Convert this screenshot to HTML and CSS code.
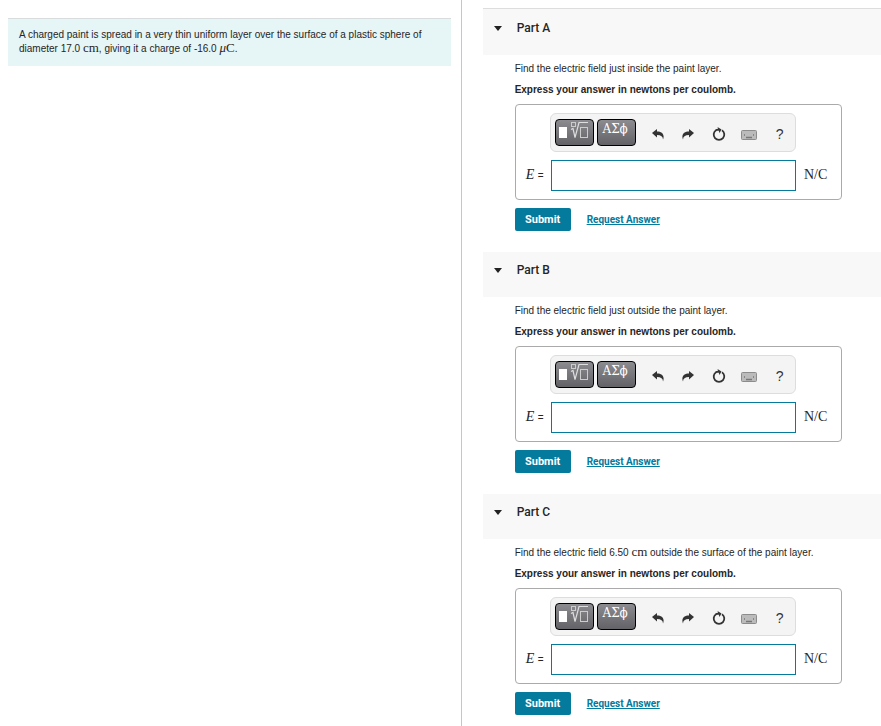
FILE: index.html
```html
<!DOCTYPE html>
<html lang="en">
<head>
  <meta charset="UTF-8">
  <meta name="viewport" content="width=device-width, initial-scale=1.0">
  <title>Charged Paint Layer</title>
  <link rel="stylesheet" href="styles.css">
</head>
<body>
  <!-- Shared icons -->
  <svg class="sprite" aria-hidden="true">
    <symbol id="template" viewBox="0 0 39 27">
      <rect x="4" y="7" width="8" height="11" fill="#fff"/>
      <rect x="16.500" y="2.500" width="4" height="4" fill="none" stroke="#ccc"/>
      <path d="M16 9.500l2-1 2 9 4-15h9" fill="none" stroke="#ddd" stroke-width="1.200"/>
      <rect x="25.500" y="7.500" width="7" height="10" fill="none" stroke="#ccc"/>
    </symbol>
    <symbol id="undo" viewBox="0 0 12 12">
      <path d="M0 5l5-4v2.500c5 0 8 3 6 8 0-3-2-4.500-6-4.500v2.500z" fill="#333"/>
    </symbol>
    <symbol id="redo" viewBox="0 0 12 12">
      <path d="M12 5L7 1v2.500c-5 0-8 3-6 8 0-3 2-4.500 6-4.500v2.500z" fill="#333"/>
    </symbol>
    <symbol id="reset" viewBox="0 0 14 14">
      <path d="M10 3.200a5.300 5.300 0 1 1-6 0L7 2.500" fill="none" stroke="#333" stroke-width="1.800"/>
      <path d="M5.500 0l4 2.500-2 3.500z" fill="#333"/>
    </symbol>
    <symbol id="keyboard" viewBox="0 0 16 10">
      <rect x=".5" y=".5" width="15" height="9" rx="1" fill="#bbb" stroke="#8c8c8c"/>
      <path d="M3 5h1M12 5h1M5 7.500h6" stroke="#777" stroke-width="1.500" fill="none"/>
    </symbol>
  </svg>

  <main class="page">
    <!-- Problem statement -->
    <section class="problem">
      <p class="statement">A charged paint is spread in a very thin uniform layer over the surface of a plastic sphere of diameter 17.0 <span class="math">cm</span>, giving it a charge of -16.0 <span class="math"><i>μ</i>C</span>.</p>
    </section>

    <!-- Answer parts -->
    <div class="parts">
      <section class="part">
        <h2 class="part-header"><button type="button" class="toggle"><span class="caret"></span>Part A</button></h2>
        <form class="part-body">
          <p>Find the electric field just inside the paint layer.</p>
          <p class="instruction">Express your answer in newtons per coulomb.</p>
          <div class="answer-box">
            <div class="toolbar">
              <button type="button" class="dark-btn" aria-label="Templates"><svg><use href="#template"/></svg></button>
              <button type="button" class="dark-btn">ΑΣϕ</button>
              <div class="tools">
                <button type="button" class="tool" aria-label="Undo"><svg width="12" height="12"><use href="#undo"/></svg></button>
                <button type="button" class="tool" aria-label="Redo"><svg width="12" height="12"><use href="#redo"/></svg></button>
                <button type="button" class="tool" aria-label="Reset"><svg width="14" height="14"><use href="#reset"/></svg></button>
                <button type="button" class="tool" aria-label="Keyboard shortcuts"><svg class="keys" width="16" height="10"><use href="#keyboard"/></svg></button>
                <button type="button" class="tool">?</button>
              </div>
            </div>
            <label class="math" for="answerA"><i>E</i> <span class="equals">=</span></label>
            <input type="text" id="answerA" class="answer">
            <span class="math unit">N/C</span>
          </div>
          <div class="actions">
            <button type="submit" class="submit">Submit</button>
            <a href="#" class="request">Request Answer</a>
          </div>
        </form>
      </section>

      <section class="part">
        <h2 class="part-header"><button type="button" class="toggle"><span class="caret"></span>Part B</button></h2>
        <form class="part-body">
          <p>Find the electric field just outside the paint layer.</p>
          <p class="instruction">Express your answer in newtons per coulomb.</p>
          <div class="answer-box">
            <div class="toolbar">
              <button type="button" class="dark-btn" aria-label="Templates"><svg><use href="#template"/></svg></button>
              <button type="button" class="dark-btn">ΑΣϕ</button>
              <div class="tools">
                <button type="button" class="tool" aria-label="Undo"><svg width="12" height="12"><use href="#undo"/></svg></button>
                <button type="button" class="tool" aria-label="Redo"><svg width="12" height="12"><use href="#redo"/></svg></button>
                <button type="button" class="tool" aria-label="Reset"><svg width="14" height="14"><use href="#reset"/></svg></button>
                <button type="button" class="tool" aria-label="Keyboard shortcuts"><svg class="keys" width="16" height="10"><use href="#keyboard"/></svg></button>
                <button type="button" class="tool">?</button>
              </div>
            </div>
            <label class="math" for="answerB"><i>E</i> <span class="equals">=</span></label>
            <input type="text" id="answerB" class="answer">
            <span class="math unit">N/C</span>
          </div>
          <div class="actions">
            <button type="submit" class="submit">Submit</button>
            <a href="#" class="request">Request Answer</a>
          </div>
        </form>
      </section>

      <section class="part">
        <h2 class="part-header"><button type="button" class="toggle"><span class="caret"></span>Part C</button></h2>
        <form class="part-body">
          <p>Find the electric field 6.50 <span class="math">cm</span> outside the surface of the paint layer.</p>
          <p class="instruction">Express your answer in newtons per coulomb.</p>
          <div class="answer-box">
            <div class="toolbar">
              <button type="button" class="dark-btn" aria-label="Templates"><svg><use href="#template"/></svg></button>
              <button type="button" class="dark-btn">ΑΣϕ</button>
              <div class="tools">
                <button type="button" class="tool" aria-label="Undo"><svg width="12" height="12"><use href="#undo"/></svg></button>
                <button type="button" class="tool" aria-label="Redo"><svg width="12" height="12"><use href="#redo"/></svg></button>
                <button type="button" class="tool" aria-label="Reset"><svg width="14" height="14"><use href="#reset"/></svg></button>
                <button type="button" class="tool" aria-label="Keyboard shortcuts"><svg class="keys" width="16" height="10"><use href="#keyboard"/></svg></button>
                <button type="button" class="tool">?</button>
              </div>
            </div>
            <label class="math" for="answerC"><i>E</i> <span class="equals">=</span></label>
            <input type="text" id="answerC" class="answer">
            <span class="math unit">N/C</span>
          </div>
          <div class="actions">
            <button type="submit" class="submit">Submit</button>
            <a href="#" class="request">Request Answer</a>
          </div>
        </form>
      </section>
    </div>
  </main>
</body>
</html>
```
FILE: styles.css
```css
/* General Styles */
* {
  box-sizing: border-box;
}

body {
  margin: 0;
  background: #fff;
  color: #252525;
  font-family: 'Liberation Sans', Arial, sans-serif;
  font-size: 10px;
  line-height: 14px;
}

p {
  margin: 0;
}

button {
  font-family: inherit;
  color: inherit;
  cursor: pointer;
}

.sprite {
  display: none;
}

.page {
  display: grid;
  grid-template-columns: 52.4% 1fr;
  min-height: 100vh;
}

.math {
  font-family: 'Liberation Serif', 'Times New Roman', serif;
  font-size: 14px;
}

p .math {
  font-size: 13px;
  line-height: 10px;
}

/* Problem statement */
.problem {
  padding: 18px 10px 18px 8px;
  border-right: 1px solid #bcc8d6;
}

.statement {
  padding: 9px 10px 10px 11px;
  border-top: 1px solid #d9dcdc;
  background: #e6f5f6;
}

/* Parts */
.parts {
  padding: 8px 0 0 21px;
}

.part:first-child {
  border-top: 1px solid #ddd;
}

.part-header {
  margin: 0;
  height: 45px;
  padding: 10px 11px;
  background: #f8f8f8;
}

.part:first-child .part-header {
  height: 46px;
  padding-top: 11px;
}

.toggle {
  display: flex;
  align-items: center;
  gap: 15px;
  padding: 0;
  border: none;
  background: none;
  font-family: Roboto, Arial, sans-serif;
  font-size: 12px;
  font-weight: 500;
  line-height: 16px;
}

.caret {
  border: 4px solid transparent;
  border-top: 5px solid #222;
  border-bottom: none;
}

.part-body {
  padding: 7px 39px 21px 32px;
}

.instruction {
  margin: 7px 0;
  font-weight: bold;
}

/* Answer box */
.answer-box {
  display: grid;
  grid-template-columns: 25px minmax(0, 1fr) 38px;
  row-gap: 7px;
  align-items: center;
  height: 96px;
  padding: 8px 7px 8px 10px;
  border: 1px solid #aaa;
  border-radius: 4px;
}

.toolbar {
  grid-column: 2;
  display: flex;
  align-items: center;
  gap: 3px;
  height: 39px;
  margin-left: -1px;
  padding-left: 4px;
  border: 1px solid #ddd;
  border-radius: 6px;
  background: #f4f4f4;
}

.dark-btn {
  flex: none;
  width: 39px;
  height: 27px;
  padding: 0 5px 8px 3px;
  border: 1px solid #000;
  border-radius: 4px;
  background: linear-gradient(#8b8b90, #626267);
  color: #fff;
  font-family: 'DejaVu Serif', serif;
  font-size: 12px;
}

.dark-btn svg {
  display: block;
  width: 39px;
  height: 27px;
  margin: 0 -4px -8px;
}

.tools {
  display: flex;
  flex: 1;
  padding-left: 4px;
}

.tool {
  display: flex;
  flex: 1;
  align-items: center;
  justify-content: center;
  height: 27px;
  padding: 2px 0 0;
  border: none;
  background: none;
  color: #333;
  font-size: 14px;
}

.keys {
  margin-top: 3px;
}

.answer-box label {
  grid-column: 1;
}

.equals {
  font-family: 'Liberation Sans', Arial, sans-serif;
  font-size: 10px;
}

.answer {
  width: 100%;
  height: 31px;
  padding: 0 6px;
  border: 1px solid #047a9c;
  font-size: 14px;
}

.unit {
  padding-left: 8px;
}

/* Actions */
.actions {
  display: flex;
  align-items: center;
  gap: 16px;
  margin-top: 8px;
}

.submit {
  width: 56px;
  height: 23px;
  padding: 0;
  border: none;
  border-radius: 2px;
  background: #047a9c;
  color: #fff;
  font-family: Roboto, Arial, sans-serif;
  font-size: 11px;
  font-weight: bold;
}

.request {
  color: #047a9c;
  font-family: Roboto, Arial, sans-serif;
  font-weight: bold;
}
```
